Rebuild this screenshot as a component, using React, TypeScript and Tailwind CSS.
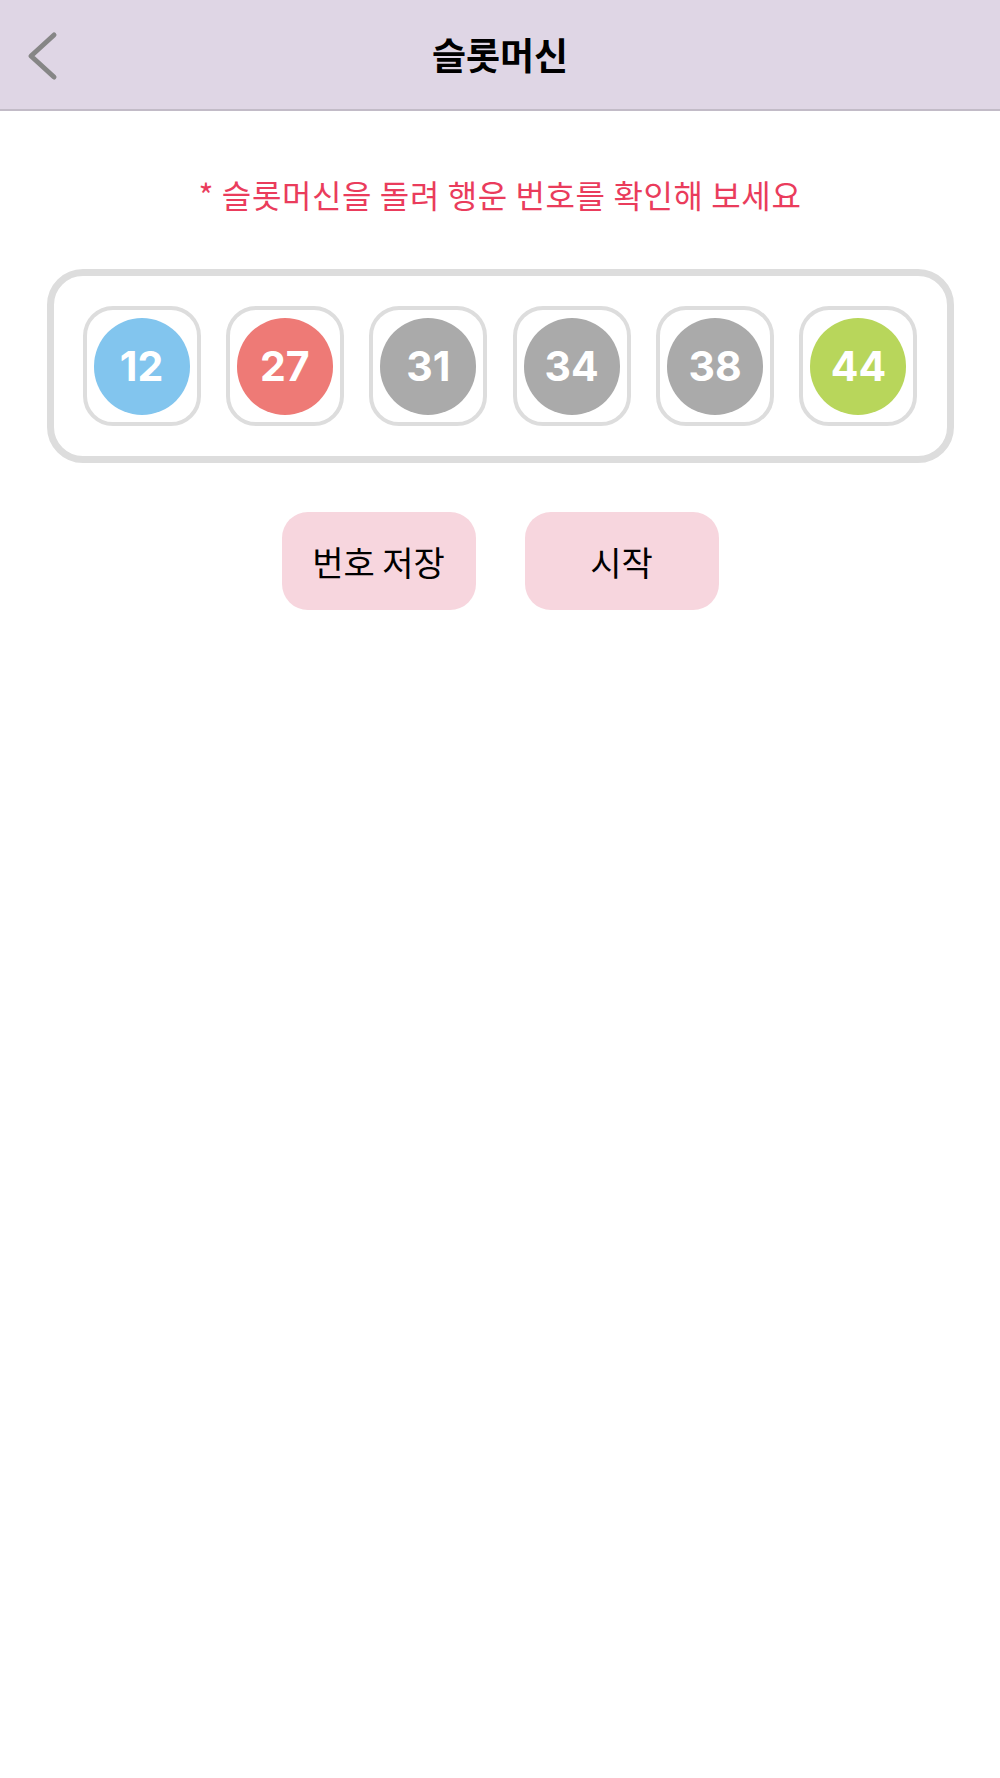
import React from 'react';

const BALLS = [
  { n: 12, bg: 'bg-[#82c5ee]' },
  { n: 27, bg: 'bg-[#ee7a76]' },
  { n: 31, bg: 'bg-[#aaaaaa]' },
  { n: 34, bg: 'bg-[#aaaaaa]' },
  { n: 38, bg: 'bg-[#aaaaaa]' },
  { n: 44, bg: 'bg-[#b8d65b]' },
];

const KR = { fontFamily: '"Noto Sans CJK KR", "Noto Sans", sans-serif' };

export default function App() {
  return (
    <div className="min-h-[1778px] bg-white" style={KR}>
      {/* 헤더 */}
      <header className="h-[111px] bg-[#dfd6e5] border-b-2 border-[#c2bbc7] grid grid-cols-[100px_1fr_100px] items-center">
        <button className="h-full flex items-center pl-[26px] pt-[2px]">
          <svg width="34" height="52" viewBox="0 0 34 52" fill="none">
            <path d="M28 5 L5 26 L28 47" stroke="#868686" strokeWidth="5" strokeLinecap="round" strokeLinejoin="round" />
          </svg>
        </button>
        <h1 className="text-center text-[37px] font-bold text-black leading-none">슬롯머신</h1>
        <div />
      </header>

      <main className="flex flex-col items-center">
        <p className="mt-[64px] text-[32px] tracking-[0.6px] leading-[38px] text-[#ea3c5c]">* 슬롯머신을 돌려 행운 번호를 확인해 보세요</p>

        <div className="mt-[56px] w-[907px] border-[7px] border-[#dddddd] rounded-[36px] px-[29px] py-[30px] flex justify-between">
          {BALLS.map((b, i) => (
            <div key={i} className="w-[118px] h-[120px] border-4 border-[#dddddd] rounded-[30px] flex items-center justify-center">
              <div className={`w-[96px] h-[97px] rounded-full ${b.bg} flex items-center justify-center`}>
                <span className="text-white font-bold text-[41px] leading-none" style={{ fontFamily: 'Inter, "Liberation Sans", sans-serif' }}>
                  {b.n}
                </span>
              </div>
            </div>
          ))}
        </div>

        <div className="mt-[49px] flex gap-[49px]">
          <button className="w-[194px] h-[98px] rounded-[26px] bg-[#f7d6de] text-[34px] text-black">번호 저장</button>
          <button className="w-[194px] h-[98px] rounded-[26px] bg-[#f7d6de] text-[34px] text-black">시작</button>
        </div>
      </main>
    </div>
  );
}
